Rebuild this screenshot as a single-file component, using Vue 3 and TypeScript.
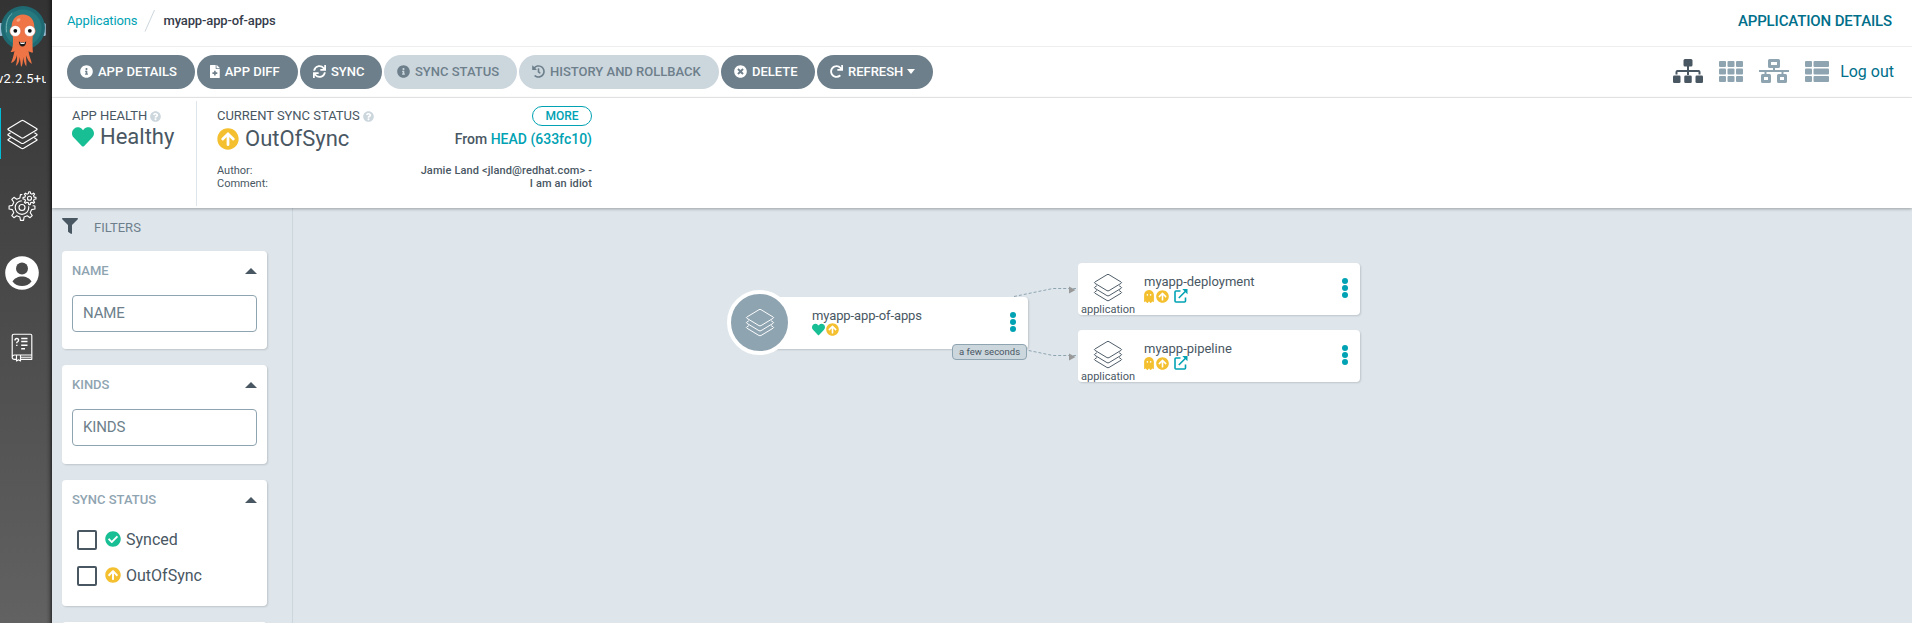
<script setup lang="ts">
interface Glyph { w: number; d: string }

const glyphs: Record<string, Glyph> = {
  info: { w: 512, d: 'M256 8C119.043 8 8 119.083 8 256c0 136.997 111.043 248 248 248s248-111.003 248-248C504 119.083 392.957 8 256 8zm0 110c23.196 0 42 18.804 42 42s-18.804 42-42 42-42-18.804-42-42 18.804-42 42-42zm56 254c0 6.627-5.373 12-12 12h-88c-6.627 0-12-5.373-12-12v-24c0-6.627 5.373-12 12-12h12v-64h-12c-6.627 0-12-5.373-12-12v-24c0-6.627 5.373-12 12-12h64c6.627 0 12 5.373 12 12v100h12c6.627 0 12 5.373 12 12v24z' },
  diff: { w: 384, d: 'M377 105L279.1 7c-4.5-4.5-10.6-7-17-7H256v128h128v-6.1c0-6.3-2.5-12.4-7-16.9zM224 136V0H24C10.7 0 0 10.7 0 24v464c0 13.3 10.7 24 24 24h336c13.3 0 24-10.7 24-24V160H248c-13.2 0-24-10.8-24-24zm64 160v48c0 4.4-3.6 8-8 8h-56v56c0 4.4-3.6 8-8 8h-48c-4.4 0-8-3.6-8-8v-56h-56c-4.4 0-8-3.6-8-8v-48c0-4.4 3.6-8 8-8h56v-56c0-4.4 3.6-8 8-8h48c4.4 0 8 3.6 8 8v56h56c4.4 0 8 3.6 8 8z' },
  sync: { w: 512, d: 'M440.65 12.57l4 82.77A247.16 247.16 0 0 0 255.83 8C134.73 8 33.91 94.92 12.29 209.82A12 12 0 0 0 24.09 224h49.05a12 12 0 0 0 11.67-9.26 175.91 175.91 0 0 1 317-56.94l-101.46-4.86a12 12 0 0 0-12.57 12v47.41a12 12 0 0 0 12 12H500a12 12 0 0 0 12-12V12a12 12 0 0 0-12-12h-47.37a12 12 0 0 0-11.98 12.57zM255.83 432a175.61 175.61 0 0 1-146-77.8l101.8 4.87a12 12 0 0 0 12.57-12v-47.4a12 12 0 0 0-12-12H12a12 12 0 0 0-12 12V500a12 12 0 0 0 12 12h47.35a12 12 0 0 0 12-12.6l-4.15-82.57A247.17 247.17 0 0 0 255.83 504c121.11 0 221.93-86.92 243.55-201.82a12 12 0 0 0-11.8-14.18h-49.05a12 12 0 0 0-11.67 9.26A175.86 175.86 0 0 1 255.83 432z' },
  history: { w: 512, d: 'M504 255.531c.253 136.64-111.18 248.372-247.82 248.468-59.015.042-113.223-20.53-155.822-54.911-11.077-8.94-11.905-25.541-1.839-35.607l11.267-11.267c8.609-8.609 22.353-9.551 31.891-1.984C173.062 425.135 212.781 440 256 440c101.705 0 184-82.311 184-184 0-101.705-82.311-184-184-184-48.814 0-93.149 18.969-126.068 49.932l50.754 50.754c10.08 10.08 2.941 27.314-11.313 27.314H24c-8.837 0-16-7.163-16-16V38.627c0-14.254 17.234-21.393 27.314-11.314l49.372 49.372C129.209 34.136 189.552 8 256 8c136.81 0 247.747 110.78 248 247.531zm-180.912 78.784l9.823-12.63c8.138-10.463 6.253-25.542-4.21-33.679L288 256.349V152c0-13.255-10.745-24-24-24h-16c-13.255 0-24 10.745-24 24v135.651l65.409 50.874c10.463 8.137 25.541 6.253 33.679-4.21z' },
  times: { w: 512, d: 'M256 8C119 8 8 119 8 256s111 248 248 248 248-111 248-248S393 8 256 8zm121.6 313.1c4.7 4.7 4.7 12.3 0 17L338 377.6c-4.7 4.7-12.3 4.7-17 0L256 312l-65.1 65.6c-4.7 4.7-12.3 4.7-17 0L134.4 338c-4.7-4.7-4.7-12.3 0-17l65.6-65-65.6-65.1c-4.7-4.7-4.7-12.3 0-17l39.6-39.6c4.7-4.7 12.3-4.7 17 0l65 65.7 65.1-65.6c4.7-4.7 12.3-4.7 17 0l39.6 39.6c4.7 4.7 4.7 12.3 0 17L312 256l65.6 65.1z' },
  redo: { w: 512, d: 'M500.33 0h-47.41a12 12 0 0 0-12 12.57l4 82.76A247.42 247.42 0 0 0 256 8C119.34 8 7.9 119.53 8 256.19 8.1 393.07 119.1 504 256 504a247.1 247.1 0 0 0 166.18-63.91 12 12 0 0 0 .48-17.43l-34-34a12 12 0 0 0-16.38-.55A176 176 0 1 1 402.1 157.8l-101.53-4.87a12 12 0 0 0-12.57 12v47.41a12 12 0 0 0 12 12h200.33a12 12 0 0 0 12-12V12a12 12 0 0 0-12-12z' },
  question: { w: 512, d: 'M504 256c0 136.997-111.043 248-248 248S8 392.997 8 256C8 119.083 119.043 8 256 8s248 111.083 248 248zM262.655 90c-54.497 0-89.255 22.957-116.549 63.758-3.536 5.286-2.353 12.415 2.715 16.258l34.699 26.31c5.205 3.947 12.621 3.008 16.665-2.122 17.864-22.658 30.113-35.797 57.303-35.797 20.429 0 45.698 13.148 45.698 32.958 0 14.976-12.363 22.667-32.534 33.976C247.128 238.528 216 254.941 216 296v4c0 6.627 5.373 12 12 12h56c6.627 0 12-5.373 12-12v-1.333c0-28.462 83.186-29.647 83.186-106.667 0-58.002-60.165-102-116.531-102zM256 338c-25.365 0-46 20.635-46 46 0 25.364 20.635 46 46 46s46-20.636 46-46c0-25.365-20.635-46-46-46z' },
  heart: { w: 512, d: 'M462.3 62.6C407.5 15.9 326 24.3 275.7 76.2L256 96.5l-19.7-20.3C186.1 24.3 104.5 15.9 49.7 62.6c-62.8 53.6-66.1 149.8-9.9 207.9l193.5 199.8c12.5 12.9 32.8 12.9 45.3 0l193.5-199.8c56.3-58.1 53-154.3-9.8-207.9z' },
  up: { w: 512, d: 'M8 256C8 119 119 8 256 8s248 111 248 248-111 248-248 248S8 393 8 256zm143.6 28.9l72.4-75.5V392c0 13.3 10.7 24 24 24h16c13.3 0 24-10.7 24-24V209.4l72.4 75.5c9.3 9.7 24.8 9.9 34.3.4l10.9-11c9.4-9.4 9.4-24.6 0-33.9L273 107.7c-9.4-9.4-24.6-9.4-33.9 0L106.3 240.4c-9.4 9.4-9.4 24.6 0 33.9l10.9 11c9.6 9.5 25.1 9.3 34.4-.4z' },
  check: { w: 512, d: 'M504 256c0 136.967-111.033 248-248 248S8 392.967 8 256 119.033 8 256 8s248 111.033 248 248zM227.314 387.314l184-184c6.248-6.248 6.248-16.379 0-22.627l-22.627-22.627c-6.248-6.249-16.379-6.249-22.628 0L216 308.118l-70.059-70.059c-6.248-6.248-16.379-6.248-22.628 0l-22.627 22.627c-6.248 6.248-6.248 16.379 0 22.627l104 104c6.249 6.249 16.379 6.249 22.628.001z' },
  filter: { w: 512, d: 'M487.976 0H24.028C2.71 0-8.047 25.866 7.058 40.971L192 225.941V432c0 7.831 3.821 15.17 10.237 19.662l80 55.98C298.02 518.69 320 507.493 320 487.98V225.941l184.947-184.97C520.021 25.896 509.338 0 487.976 0z' },
  ghost: { w: 384, d: 'M186.1.09C81.01 3.24 0 94.92 0 200.05v263.92c0 14.26 17.23 21.39 27.31 11.31l24.92-18.53c6.66-4.95 16-3.99 21.51 2.21l42.95 48.35c6.25 6.25 16.38 6.25 22.63 0l40.72-45.85c6.37-7.17 17.56-7.17 23.92 0l40.72 45.85c6.25 6.25 16.38 6.25 22.63 0l42.95-48.35c5.51-6.2 14.85-7.17 21.51-2.21l24.92 18.53c10.08 10.08 27.31 2.94 27.31-11.31V192C384 84 294.83-3.17 186.1.09zM128 224c-17.67 0-32-14.33-32-32s14.33-32 32-32 32 14.33 32 32-14.33 32-32 32zm128 0c-17.67 0-32-14.33-32-32s14.33-32 32-32 32 14.33 32 32-14.33 32-32 32z' },
}

interface Action { label: string; icon: string; cls: string; caret?: boolean }
const actions: Action[] = [
  { label: 'APP DETAILS', icon: 'info', cls: 'b-details' },
  { label: 'APP DIFF', icon: 'diff', cls: 'b-diff' },
  { label: 'SYNC', icon: 'sync', cls: 'b-sync' },
  { label: 'SYNC STATUS', icon: 'info', cls: 'b-status disabled' },
  { label: 'HISTORY AND ROLLBACK', icon: 'history', cls: 'b-history disabled' },
  { label: 'DELETE', icon: 'times', cls: 'b-delete' },
  { label: 'REFRESH', icon: 'redo', cls: 'b-refresh', caret: true },
]

const syncOptions = [
  { label: 'Synced', icon: 'check', cls: 'green' },
  { label: 'OutOfSync', icon: 'up', cls: 'yellow' },
]

const children = [
  { name: 'myapp-deployment', cls: 'n-first' },
  { name: 'myapp-pipeline', cls: 'n-second' },
]
const layers = 'M14.4 1.8 Q15.5 1 16.6 1.8 L29 9.3 Q30.2 10 29 10.7 L16.6 18.2 Q15.5 18.8 14.4 18.2 L2 10.7 Q.8 10 2 9.3 Z M4 13.2 L2 14.5 Q.8 15.2 2 15.9 L14.4 23.4 Q15.5 24 16.6 23.4 L29 15.9 Q30.2 15.2 29 14.5 L27 13.2 M4 18.2 L2 19.5 Q.8 20.2 2 20.9 L14.4 28.4 Q15.5 29 16.6 28.4 L29 20.9 Q30.2 20.2 29 19.5 L27 18.2'
const gear = (r1: number, r2: number, n: number): string => {
  const pts: string[] = []
  for (let i = 0; i < n; i++) {
    const a = (i * 2 * Math.PI) / n
    const s = Math.PI / n
    const at = (r: number, t: number) => `${(r * Math.cos(t)).toFixed(2)} ${(r * Math.sin(t)).toFixed(2)}`
    pts.push(at(r1, a - s * 0.55), at(r2, a - s * 0.3), at(r2, a + s * 0.3), at(r1, a + s * 0.55))
  }
  return `M${pts.join('L')}Z`
}
</script>

<template>
  <div class="shell">
    <nav class="sidebar">
      <svg class="logo" viewBox="0 0 46 68" width="46" height="68">
        <rect x="-1" y="23" width="4" height="13" rx="1.5" fill="#9cbdd3" />
        <rect x="42.6" y="23" width="3.2" height="13" rx="1.5" fill="#9cbdd3" />
        <circle cx="23" cy="28" r="22" fill="#1f6a72" />
        <circle cx="23" cy="28" r="18.5" fill="#26797f" />
        <path d="M6.500 32C5.500 22 8 17 12 13.500" fill="none" stroke="#6fb3b6" stroke-width="1" stroke-linecap="round" />
        <path d="M23 14.500c-7 0-11.300 5-11.300 12 0 5 1.300 8 1.300 13 0 5-.2 10-2.500 12.500 2 .3 3-.3 4-1-1 5-2 8-3.500 12 3.500-1 5-4 6-8 .3 4-.4 8-1.200 11 2.500-1.500 3.600-5 3.900-9 .6 3.500.9 6.500 1.300 10 1.800-1.500 2-6 2-10 .8 4 1.500 7 3.300 9.500.6-4-.3-7-.3-11 1.500 4 3.200 7 5.800 8.500-.6-4.500-2.800-8-3.300-13 1.200 1 2.800 1.600 4.500 1.500C32.500 49 32.500 45 32.500 40c0-5 1.800-8 1.800-13.500 0-7-4.300-12-11.300-12z" fill="#ef7446" />
        <ellipse cx="18.500" cy="20" rx="2.200" ry="1.500" fill="#f6a583" transform="rotate(-35 18.500 20)" />
        <circle cx="15.300" cy="31" r="5.500" fill="#fff" stroke="#d95b34" stroke-width=".5" />
        <circle cx="29.800" cy="31" r="5.500" fill="#fff" stroke="#d95b34" stroke-width=".5" />
        <circle cx="15.300" cy="30.800" r="1.900" fill="#111" />
        <circle cx="29.800" cy="30.800" r="1.900" fill="#111" />
        <path d="M18.800 41.500q3.700 2 7.400 0q-.5 5-3.700 5t-3.700-5z" fill="#1c1c1c" />
        <path d="M20 42.300q2.500 1 5 0l-.5 1.400q-2 .6-4 0z" fill="#fff" />
      </svg>
      <div class="version"><span>v2.2.5+u</span></div>
      <div class="nav-item active">
        <svg viewBox="0 0 31 30" width="33" height="31" class="line"><path :d="layers" /></svg>
      </div>
      <div class="nav-item cogs">
        <svg viewBox="0 0 30 30" width="30" height="30" class="line">
          <g transform="translate(14 16.500)"><path :d="gear(9.800, 13, 8)" /><circle r="6.800" /><circle r="3" /></g>
          <circle cx="21.500" cy="7.200" r="8.200" class="mask bare" />
          <g transform="translate(21.500 7.200)"><path class="mask" :d="gear(4.800, 6.500, 8)" /><circle r="2" /></g>
        </svg>
      </div>
      <div class="nav-item user">
        <svg viewBox="0 0 34 34" width="34" height="34">
          <circle cx="17" cy="17" r="16.800" fill="#fff" />
          <circle cx="17" cy="12.500" r="6" fill="#494949" />
          <path d="M7.500 25.500c1.500-3 5.500-5 9.500-5s8 2 9.500 5c-2.200 3-5.800 4.500-9.500 4.500s-7.300-1.500-9.500-4.500z" fill="#494949" />
        </svg>
      </div>
      <div class="nav-item docs">
        <svg viewBox="0 0 22 29" width="22" height="29" class="line">
          <path d="M3 1.200H19.500Q20.800 1.200 20.800 2.500V26.300H10M3 1.200Q1.200 1.200 1.200 3V24.500Q1.200 26.300 3.500 26.300H5M1.200 24Q1.500 22 3.500 22H20.800M10 24.200H20M5.500 22V28L7.500 26.800L9.500 28V22" />
          <path d="M4 7.500Q4 5.500 5.800 5.500T7.600 7.300Q7.500 8.600 5.800 9.300V10.300M5.800 11.800V13M10.200 5.500H16.500M10.200 8.500H16.500M10.200 12.200H16.500M10.200 15.800H14" stroke-width="1.400" />
        </svg>
      </div>
    </nav>

    <main class="main">
      <header class="topbar">
        <a class="crumb">Applications</a>
        <svg class="slash" viewBox="0 0 12 24" width="12" height="24"><path d="M1 22.500L10.500 1" /></svg>
        <span class="current">myapp-app-of-apps</span>
        <span class="page-title">APPLICATION DETAILS</span>
      </header>

      <div class="toolbar">
        <button v-for="a in actions" :key="a.label" class="btn" :class="a.cls">
          <svg class="ico" :viewBox="`0 0 ${glyphs[a.icon].w} 512`"><path :d="glyphs[a.icon].d" /></svg>
          <span>{{ a.label }}</span>
          <i v-if="a.caret" class="caret"></i>
        </button>
        <div class="views">
          <svg class="v-tree" viewBox="0 0 30 24" width="30" height="24">
            <path d="M10.500 1.500Q10.500 0 12 0H18Q19.500 0 19.500 1.500V6Q19.500 7.500 18 7.500H16V11H25.500Q27.500 11 27.500 13V15.500H25.500V13H16V16H14V13H4.500V15.500H2.500V13Q2.500 11 4.500 11H14V7.500H12Q10.500 7.500 10.500 6Z" />
            <rect x="0" y="16.500" width="7.500" height="7.500" rx="1.300" /><rect x="11.250" y="16.500" width="7.500" height="7.500" rx="1.300" /><rect x="22.500" y="16.500" width="7.500" height="7.500" rx="1.300" />
          </svg>
          <svg class="v-grid" viewBox="0 0 24 21" width="24" height="21">
            <template v-for="r in 3" :key="r"><rect v-for="c in 3" :key="c" :x="(c - 1) * 8.5" :y="(r - 1) * 7.5" width="7" height="6" rx="1" /></template>
          </svg>
          <svg class="v-net" viewBox="0 0 30 24" width="30" height="24">
            <path fill-rule="evenodd" d="M10.500 0H19.500Q21 0 21 1.500V7.500Q21 9 19.500 9H16V11H30V13H24.500V15H26.500Q28 15 28 16.500V22.500Q28 24 26.500 24H19.500Q18 24 18 22.500V16.500Q18 15 19.500 15H22.500V13H7.500V15H10.500Q12 15 12 16.500V22.500Q12 24 10.500 24H3.500Q2 24 2 22.500V16.500Q2 15 3.500 15H5.500V13H0V11H14V9H10.500Q9 9 9 7.500V1.500Q9 0 10.500 0ZM12 3V6H18V3ZM5 18V21H9V18ZM21 18V21H25V18Z" />
          </svg>
          <svg class="v-list" viewBox="0 0 24 21" width="24" height="21">
            <template v-for="r in 3" :key="r"><rect x="0" :y="(r - 1) * 7.5" width="7" height="6" rx="1" /><rect x="8.500" :y="(r - 1) * 7.5" width="15.500" height="6" rx="1" /></template>
          </svg>
          <a class="logout">Log out</a>
        </div>
      </div>

      <section class="status">
        <div class="health">
          <div class="label">APP HEALTH <svg class="help" viewBox="0 0 512 512"><path :d="glyphs.question.d" /></svg></div>
          <div class="value"><svg class="big green" viewBox="0 0 512 512"><path :d="glyphs.heart.d" /></svg>Healthy</div>
        </div>
        <div class="sync">
          <div class="row first">
            <div class="label">CURRENT SYNC STATUS <svg class="help" viewBox="0 0 512 512"><path :d="glyphs.question.d" /></svg></div>
            <button class="more">MORE</button>
          </div>
          <div class="row second">
            <div class="value"><svg class="big yellow" viewBox="0 0 512 512"><path :d="glyphs.up.d" /></svg>OutOfSync</div>
            <div class="from">From <a>HEAD (633fc10)</a></div>
          </div>
          <div class="row meta author"><span>Author:</span><b>Jamie Land &lt;jland@redhat.com&gt; -</b></div>
          <div class="row meta"><span>Comment:</span><b>I am an idiot</b></div>
        </div>
      </section>

      <div class="content">
        <aside class="filters">
          <div class="filters-title">
            <svg viewBox="0 0 512 512" width="16" height="16"><path :d="glyphs.filter.d" /></svg>
            <span>FILTERS</span>
          </div>
          <div class="card text-card">
            <div class="card-head"><span>NAME</span><i class="tri"></i></div>
            <input placeholder="NAME" />
          </div>
          <div class="card text-card kinds">
            <div class="card-head"><span>KINDS</span><i class="tri"></i></div>
            <input placeholder="KINDS" />
          </div>
          <div class="card check-card">
            <div class="card-head"><span>SYNC STATUS</span><i class="tri"></i></div>
            <label v-for="o in syncOptions" :key="o.label" class="option">
              <i class="box"></i>
              <svg :class="o.cls" viewBox="0 0 512 512" width="16" height="16"><path :d="glyphs[o.icon].d" /></svg>
              <span>{{ o.label }}</span>
            </label>
          </div>
          <div class="card text-card"></div>
        </aside>

        <div class="canvas">
          <svg class="edges" viewBox="0 0 1619 415" width="1619" height="415">
            <path d="M721 88.500L760 80.500L783 80.500" />
            <path d="M721 139.500L760 147.500L783 147.500" />
            <path class="tip" d="M776 78.500L782.500 82L776 85.500Z" />
            <path class="tip" d="M776 145.500L782.500 149L776 152.500Z" />
          </svg>
          <article class="node root">
            <div class="round"><svg viewBox="0 0 31 30" width="30" height="29" class="line"><path :d="layers" /></svg></div>
            <div class="body">
              <div class="name">myapp-app-of-apps</div>
              <div class="marks">
                <svg class="m green" viewBox="0 0 512 512"><path :d="glyphs.heart.d" /></svg>
                <svg class="m yellow" viewBox="0 0 512 512"><path :d="glyphs.up.d" /></svg>
              </div>
            </div>
            <div class="dots"><i></i><i></i><i></i></div>
            <div class="age">a few seconds</div>
          </article>
          <article v-for="n in children" :key="n.name" class="node child" :class="n.cls">
            <div class="kind">
              <svg viewBox="0 0 31 30" width="30" height="29" class="line dark"><path :d="layers" /></svg>
              <span>application</span>
            </div>
            <div class="body">
              <div class="name">{{ n.name }}</div>
              <div class="marks">
                <svg class="g yellow" viewBox="0 0 384 512"><path :d="glyphs.ghost.d" /></svg>
                <svg class="m yellow" viewBox="0 0 512 512"><path :d="glyphs.up.d" /></svg>
                <svg class="ext" viewBox="0 0 14 14"><path d="M6.500 2H2Q1 2 1 3V12Q1 13 2 13H10.500Q11.500 13 11.500 12V8.500M4.800 9L12 1.800" /><path class="fill" d="M8.300 0H13.500V5.200Z" /></svg>
              </div>
            </div>
            <div class="dots"><i></i><i></i><i></i></div>
          </article>
        </div>
      </div>
    </main>
  </div>
</template>

<style>
html, body { margin: 0; overflow: hidden; }
</style>

<style scoped>
* { box-sizing: border-box; }
.shell { display: flex; width: 1912px; height: 623px; overflow: hidden; font-family: Roboto, "Liberation Sans", sans-serif; color: #495763; background: #dee6eb; }
svg { display: block; flex: none; fill: currentColor; }
button { font-family: inherit; }
.line { fill: none; stroke: #fff; stroke-width: 1; stroke-linejoin: round; }
.line.dark { stroke: #495763; }
.sidebar .line { stroke-width: 1.150; }
.green { color: #18be94; }
.yellow { color: #f4c030; }

.sidebar { width: 52px; height: 623px; flex: none; background: linear-gradient(to right, transparent 46px, rgba(0,0,0,.12) 49px, rgba(0,0,0,.5) 52px), linear-gradient(#333, #626262); }
.logo { overflow: hidden; }
.version { width: 46px; height: 22px; overflow: hidden; color: #fff; font-size: 13px; line-height: 22px; letter-spacing: .3px; }
.version span { display: block; margin-left: -3px; }
.nav-item { display: flex; align-items: center; width: 44px; }
.active { margin-top: 18px; height: 51px; width: 52px; border-left: 1px solid #00bcd4; padding: 2px 0 0 5px; }
.cogs { margin-top: 31px; height: 32px; padding-left: 8px; }
.mask { fill: #434343; }
.bare { stroke: none; }
.user { margin-top: 34px; height: 34px; padding-left: 5px; }
.docs { margin-top: 43px; height: 29px; padding-left: 11px; }

.main { flex: 1; display: flex; flex-direction: column; }
.topbar { display: flex; align-items: center; height: 47px; padding: 0 20px 5px 15px; background: #fff; border-bottom: 1px solid #eceef0; font-size: 13px; letter-spacing: -.13px; }
.crumb { color: #00a2b3; }
.slash { margin: 0 7px; fill: none; stroke: #ccd6dd; stroke-width: 1; }
.current { font-weight: 500; color: #363c4a; }
.page-title { margin-left: auto; color: #006f8a; font-weight: 500; font-size: 15px; }

.toolbar { display: flex; align-items: center; height: 51px; padding: 0 18px 0 15px; background: #fff; border-bottom: 1px solid #eceef0; }
.btn { display: flex; align-items: center; height: 34px; margin: 0 2px 0 0; padding: 0 0 2px 13px; border: 0; border-radius: 17px; background: #6d7f8b; color: #fff; font-weight: 500; font-size: 13px; white-space: nowrap; }
.btn.disabled { background: #ccd6dd; color: #6d7f8b; }
.b-details { width: 128px; } .b-diff { width: 101px; } .b-sync { width: 82px; } .b-status { width: 133px; }
.b-history { width: 200px; } .b-delete { width: 94px; } .b-refresh { width: 116px; }
.ico { height: 13px; margin-right: 5px; }
.caret { margin-left: 4px; border: 4px solid transparent; border-top: 5px solid currentColor; border-bottom: 0; }
.views { display: flex; align-items: center; margin-left: auto; padding-bottom: 2px; color: #8fa4b1; }
.v-tree { color: #495763; margin-right: 16px; }
.v-grid { margin-right: 16px; }
.v-net { margin-right: 16px; }
.v-list { margin-right: 11px; }
.logout { color: #006f8a; font-size: 16px; }

.status { display: flex; height: 110px; background: #fff; position: relative; box-shadow: 0 1px 3px rgba(0,0,0,.3); }
.health { width: 145px; height: 105px; margin-top: 3px; padding: 6px 0 0 20px; border-right: 1px solid #dee6eb; }
.label { display: flex; align-items: center; font-size: 13px; line-height: 18px; white-space: nowrap; letter-spacing: -.03px; }
.help { width: 11px; height: 11px; margin-left: 3px; color: #ccd6dd; }
.value { display: flex; align-items: center; font-size: 22px; line-height: 26px; white-space: nowrap; }
.health .value { margin-top: -1px; }
.big { width: 22px; height: 22px; margin-right: 6px; }
.sync { width: 395px; padding: 8px 0 0 20px; }
.row { display: flex; justify-content: space-between; }
.first { height: 20px; }
.sync .label { height: 20px; }
.more { width: 60px; height: 20px; padding: 0; border: 1px solid #00a2b3; border-radius: 10px; background: #fff; color: #00a2b3; font-size: 12px; font-weight: 500; line-height: 18px; }
.second { align-items: center; }
.from { font-size: 14px; font-weight: 500; }
.from a { color: #00a2b3; }
.meta { font-size: 11px; line-height: 13px; }
.meta b { font-weight: 500; letter-spacing: .12px; }
.author { margin-top: 12px; }

.content { display: flex; height: 415px; }
.filters { width: 241px; height: 415px; overflow: hidden; border-right: 1px solid #ccd6dd; padding-left: 10px; }
.filters-title { display: flex; height: 43px; padding-top: 10px; gap: 16px; font-size: 13px; line-height: 19px; color: #6d7f8b; }
.filters-title svg { color: #495763; }
.card { width: 205px; margin-bottom: 16px; padding: 0 10px; background: #fff; border-radius: 4px; box-shadow: 1px 1px 2px rgba(0,0,0,.14); }
.text-card { height: 98px; }
.kinds { height: 99px; }
.check-card { height: 126px; }
.card-head { display: flex; align-items: center; justify-content: space-between; height: 39px; margin-bottom: 5px; font-size: 13px; font-weight: 500; color: #8fa4b1; }
.tri { border: 6px solid transparent; border-bottom: 6px solid #495763; border-top: 0; }
input { display: block; width: 185px; height: 37px; border: 1px solid #8fa4b1; border-radius: 4px; padding: 0 10px 1px; font: 15px Roboto, sans-serif; letter-spacing: -.15px; background: #fff; }
input::placeholder { color: #6d7f8b; opacity: 1; }
.option { display: flex; align-items: center; height: 36px; padding-left: 5px; font-size: 16px; }
.check-card .card-head { margin-bottom: 3px; }
.box { width: 20px; height: 20px; margin-right: 8px; border: 2px solid #495763; border-radius: 2px; }
.option svg { margin-bottom: 2px; }
.option span { margin: 0 0 2px 5px; }

.canvas { position: relative; flex: 1; }
.edges { position: absolute; left: 0; top: 0; fill: none; }
.edges path { stroke: #8fa4b1; stroke-dasharray: 3 2; stroke-width: 1; }
.edges .tip { fill: #999; stroke: none; }
.node { position: absolute; height: 52px; display: flex; background: #fff; border-radius: 4px; box-shadow: 1px 1px 2px rgba(0,0,0,.14); }
.root { left: 455px; top: 89px; width: 280px; }
.round { position: absolute; left: -21px; top: -7px; width: 65px; height: 65px; display: flex; align-items: center; justify-content: center; border: 4px solid #fff; border-radius: 50%; background: #8fa4b1; }
.child { left: 785px; width: 282px; }
.n-first { top: 55px; } .n-second { top: 122px; }
.kind { width: 60px; display: flex; flex-direction: column; align-items: center; padding-top: 10px; font-size: 11px; line-height: 15px; }
.root .body { margin-left: 64px; }
.child .body { margin-left: 6px; }
.body { padding-top: 10px; }
.name { height: 16px; font-size: 13px; line-height: 17px; }
.root .name { letter-spacing: -.12px; }
.marks { display: flex; align-items: center; }
.m { width: 13px; height: 13px; margin-right: 1px; }
.g { width: 10px; height: 13px; margin-right: 2px; }
.ext { width: 14px; height: 14px; margin-left: 4px; color: #00a2b3; fill: none; stroke: currentColor; stroke-width: 1.600; }
.ext .fill { fill: currentColor; stroke: none; }
.dots { margin-left: auto; width: 6px; margin-right: 12px; padding-top: 15px; display: flex; flex-direction: column; gap: 1px; }
.dots i { width: 6px; height: 6px; border-radius: 50%; background: #00a2b3; }
.age { position: absolute; right: 1px; top: 47px; width: 75px; height: 16px; border: 1px solid #8fa4b1; border-radius: 4px; background: #ccd6dd; font-size: 9.500px; line-height: 14px; text-align: center; white-space: nowrap; }
</style>
